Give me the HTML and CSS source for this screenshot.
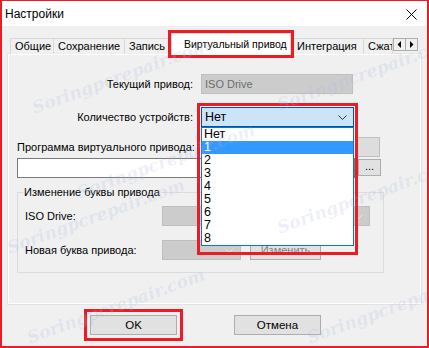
FILE: index.html
```html
<!DOCTYPE html>
<html lang="ru">
<head>
    <meta charset="UTF-8">
    <meta name="viewport" content="width=device-width, initial-scale=1.0">
    <title>Настройки</title>
    <link rel="stylesheet" href="styles.css">
</head>
<body>

<div class="window">
    <div class="titlebar">
        <span class="title">Настройки</span>
        <svg class="close" width="11" height="11" viewBox="0 0 11 11">
            <path d="M0.5 0.5 L10.5 10.5 M10.5 0.5 L0.5 10.5" stroke="#000" stroke-width="1" fill="none"/>
        </svg>
    </div>

    <div class="client">
        <div class="tabs">
            <div class="tab tab-general">Общие</div>
            <div class="tab tab-save">Сохранение</div>
            <div class="tab tab-write">Запись</div>
            <div class="tab tab-active">Виртуальный привод</div>
            <div class="tab tab-integ">Интеграция</div>
            <div class="tab tab-clip">Сжатие</div>
            <div class="tab-scroll">
                <span class="scroll-btn">
                    <svg width="5" height="7" viewBox="0 0 5 7"><polygon points="4,0 4,7 0.5,3.5" fill="#000"/></svg>
                </span>
                <span class="scroll-btn">
                    <svg width="5" height="7" viewBox="0 0 5 7"><polygon points="1,0 1,7 4.5,3.5" fill="#000"/></svg>
                </span>
            </div>
        </div>

        <div class="panel">
            <div class="row">
                <span class="row-label">Текущий привод:</span>
                <div class="field disabled">ISO Drive</div>
            </div>

            <div class="row row-count">
                <span class="row-label">Количество устройств:</span>
                <div class="combo-wrap">
                    <div class="combo open">
                        <span>Нет</span>
                        <svg class="chevron" width="9" height="5" viewBox="0 0 9 5"><path d="M0.5 0.5 L4.5 4.5 L8.5 0.5" stroke="#333" fill="none"/></svg>
                    </div>
                    <ul class="dropdown">
                        <li>Нет</li>
                        <li class="selected">1</li>
                        <li>2</li>
                        <li>3</li>
                        <li>4</li>
                        <li>5</li>
                        <li>6</li>
                        <li>7</li>
                        <li>8</li>
                    </ul>
                    <div class="mark"></div>
                </div>
            </div>

            <div class="program-head">
                <span>Программа виртуального привода:</span>
                <div class="btn btn-blank"></div>
            </div>
            <div class="program-row">
                <div class="input"></div>
                <div class="btn btn-dots">...</div>
            </div>

            <fieldset class="group">
                <legend>Изменение буквы привода</legend>
                <div class="group-row">
                    <span class="group-label">ISO Drive:</span>
                    <div class="combo disabled combo-wide">
                        <svg class="chevron" width="9" height="5" viewBox="0 0 9 5"><path d="M0.5 0.5 L4.5 4.5 L8.5 0.5" stroke="#e6e6e6" fill="none"/></svg>
                    </div>
                </div>
                <div class="group-row group-row-second">
                    <span class="group-label">Новая буква привода:</span>
                    <div class="combo disabled combo-short">
                        <svg class="chevron" width="9" height="5" viewBox="0 0 9 5"><path d="M0.5 0.5 L4.5 4.5 L8.5 0.5" stroke="#e6e6e6" fill="none"/></svg>
                    </div>
                    <div class="btn disabled btn-change">Изменить</div>
                </div>
            </fieldset>
        </div>

        <div class="footer">
            <div class="btn-main btn-ok">OK</div>
            <div class="btn-main">Отмена</div>
        </div>
    </div>

    <!-- watermark of the source screenshot -->
    <span class="wm" style="left: 25px; top: 65px;">Soringpcrepair.com</span>
    <span class="wm" style="left: 270px; top: 62px;">Soringpcrepair.com</span>
    <span class="wm" style="left: 70px; top: 150px;">Soringpcrepair.com</span>
    <span class="wm" style="left: 0px; top: 205px;">Soringpcrepair.com</span>
    <span class="wm" style="left: 270px; top: 185px;">Soringpcrepair.com</span>
    <span class="wm" style="left: 20px; top: 295px;">Soringpcrepair.com</span>
    <span class="wm" style="left: 300px; top: 295px;">Soringpcrepair.com</span>
</div>

</body>
</html>
```

FILE: styles.css
```css
body {
    margin: 0;
    font-family: "Liberation Sans", Arial, sans-serif;
    font-size: 11px;
    color: #000;
    background: #ffffff;
}

.window {
    position: relative;
    width: 429px;
    height: 348px;
    box-sizing: border-box;
    border: 2px solid #ed1c24;
    border-top-width: 1px;
    display: flex;
    flex-direction: column;
    overflow: hidden;
}

.titlebar {
    height: 25px;
    background: #ffffff;
    display: flex;
    align-items: center;
    justify-content: space-between;
    padding: 0 10px 0 3px;
    flex: 0 0 auto;
}

.title {
    font-size: 12px;
}

.close {
    margin-top: 1px;
}

.client {
    flex: 1;
    background: #f0f0f0;
    padding: 7px 6px 0 6px;
}

/* tab strip */
.tabs {
    height: 21px;
    display: flex;
    align-items: flex-end;
    padding-left: 2px;
    position: relative;
}

.tab {
    height: 16px;
    box-sizing: border-box;
    border: 1px solid #d9d9d9;
    border-bottom: none;
    background: #f0f0f0;
    line-height: 15px;
    padding-left: 4px;
    white-space: nowrap;
    margin-left: -1px;
    overflow: hidden;
}

.tab-general { width: 44px; margin-left: 0; }
.tab-save { width: 72px; }
.tab-write { width: 48px; }

.tab-active {
    width: 120px;
    height: 22px;
    background: #ffffff;
    margin-bottom: -1px;
    padding-left: 12px;
    font-size: 10.5px;
    line-height: 20px;
    position: relative;
    z-index: 2;
    overflow: visible;
    outline: 3px solid #ed1c24;
    outline-offset: 0;
}

.tab-integ { width: 72px; margin-left: 1px; }

.tab-clip {
    width: 30px;
}

.tab-scroll {
    display: flex;
    align-self: flex-end;
    margin-bottom: 3px;
}

.scroll-btn {
    width: 13px;
    height: 13px;
    box-sizing: border-box;
    border: 1px solid #adadad;
    background: #f0f0f0;
    display: flex;
    align-items: center;
    justify-content: center;
    margin-left: -1px;
}

.scroll-btn:first-child {
    margin-left: 0;
}

/* page of the tab */
.panel {
    height: 250px;
    box-sizing: border-box;
    border: 1px solid #ffffff;
    box-shadow: 0 0 0 1px #e3e3e3;
    background: #f0f0f0;
    padding: 19px 0 0 8px;
}

.row {
    display: flex;
    align-items: center;
    height: 20px;
}

.row-count {
    margin-top: 13px;
}

.row-label {
    width: 176px;
    text-align: right;
    margin-right: 8px;
}

.field {
    width: 152px;
    height: 20px;
    box-sizing: border-box;
    padding-left: 3px;
    line-height: 18px;
}

.disabled {
    background: #cccccc;
    border: 1px solid #bfbfbf;
    color: #6d6d6d;
}

.combo-wrap {
    position: relative;
    z-index: 3;
}

.combo {
    height: 20px;
    box-sizing: border-box;
    display: flex;
    align-items: center;
    justify-content: space-between;
    padding: 0 6px 0 3px;
}

.combo.open {
    width: 153px;
    background: #cce4f7;
    border: 1px solid #005499;
    font-size: 12.5px;
}

.combo-wide { width: 208px; justify-content: flex-end; }
.combo-short { width: 79px; justify-content: flex-end; }

.dropdown {
    position: absolute;
    top: 20px;
    left: 0;
    width: 153px;
    box-sizing: border-box;
    margin: 0;
    padding: 0;
    list-style: none;
    background: #ffffff;
    border: 1px solid #0078d7;
    font-size: 12.5px;
}

.dropdown li {
    height: 13px;
    line-height: 13px;
    padding-left: 2px;
}

.dropdown li.selected {
    background: #3399ff;
    color: #ffffff;
}

.mark {
    position: absolute;
    left: -4px;
    top: -4px;
    width: 161px;
    height: 152px;
    box-sizing: border-box;
    border: 3px solid #ed1c24;
    pointer-events: none;
}

.program-head {
    margin-top: 10px;
    width: 363px;
    height: 20px;
    display: flex;
    align-items: center;
    justify-content: space-between;
}

.program-row {
    margin-top: 1px;
    display: flex;
    align-items: flex-start;
}

.input {
    width: 338px;
    height: 20px;
    box-sizing: border-box;
    background: #ffffff;
    border: 1px solid #7a7a7a;
}

.btn {
    box-sizing: border-box;
    background: #e1e1e1;
    border: 1px solid #adadad;
    text-align: center;
}

.btn-blank {
    width: 23px;
    height: 20px;
    background: #dddddd;
    border-color: #bfbfbf;
}

.btn-dots {
    width: 23px;
    height: 17px;
    margin: 1px 0 0 3px;
    line-height: 12px;
}

.group {
    margin: 7px 0 0 0;
    width: 367px;
    height: 88px;
    box-sizing: border-box;
    border: 1px solid #dcdcdc;
    padding: 7px 7px 12px 7px;
}

.group legend {
    padding: 0 1px;
    margin-left: -2px;
    line-height: 14px;
}

.group-row {
    display: flex;
    align-items: center;
    height: 20px;
}

.group-row-second {
    margin-top: 14px;
}

.group-label {
    width: 137px;
}

.btn-change {
    width: 71px;
    height: 20px;
    margin-left: 9px;
    line-height: 18px;
    color: #838383;
}

/* dialog buttons */
.footer {
    display: flex;
    gap: 57px;
    padding: 11px 0 0 82px;
}

.btn-main {
    width: 87px;
    height: 20px;
    box-sizing: border-box;
    background: #e1e1e1;
    border: 1px solid #adadad;
    text-align: center;
    line-height: 18px;
    font-size: 11.5px;
}

.btn-ok {
    outline: 3px solid #ed1c24;
    outline-offset: 3px;
}

.wm {
    position: absolute;
    z-index: 5;
    font-family: "DejaVu Serif", serif;
    font-weight: bold;
    font-style: italic;
    font-size: 17px;
    color: rgba(175, 185, 225, 0.22);
    transform: rotate(-20deg);
    white-space: nowrap;
    pointer-events: none;
}
```
